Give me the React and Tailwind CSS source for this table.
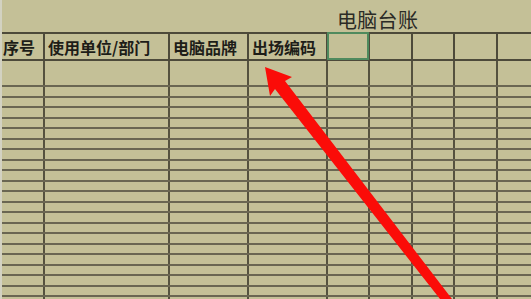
import React from "react";

const COLS = "grid grid-cols-[43px_125px_79px_79px_42px_43px_42px_43px_35px]";
const HEADERS = ["序号", "使用单位/部门", "电脑品牌", "出场编码", "", "", "", "", ""];

// 20 thin data rows, alternating 11/10 px like the sheet's zoomed rows
const ROW_H = ["h-[11px]", "h-[10px]"];

function Row({ h }) {
  return (
    <div className={`${COLS} ${h} border-b-2 border-[#6a6652]`}>
      {HEADERS.map((_, i) => (
        <div key={i} className="border-r-2 border-[#55523f]" />
      ))}
    </div>
  );
}

export default function App() {
  const rows = Array.from({ length: 21 }, (_, i) => i);

  return (
    <div
      className="relative w-[531px] h-[299px] overflow-hidden bg-[#c4c097] border-l-2 border-[#d3d2c2]"
      style={{ fontFamily: '"Noto Sans CJK SC", "Noto Sans", sans-serif' }}
    >
      {/* title above table */}
      <div className="h-[32px] pl-[335px] pt-[8px]">
        <span className="text-[20px] leading-[24px] text-[#2b2b26] tracking-[0.3px]">
          电脑台账
        </span>
      </div>

      {/* header row */}
      <div className={`${COLS} h-[29px] border-y-2 border-[#4d4a3a]`}>
        {HEADERS.map((t, i) => (
          <div
            key={i}
            className={`relative flex items-center ${i === 0 ? "pl-[1px]" : "pl-[3px]"} border-r-2 border-[#4d4a3a] text-[16px] font-bold text-[#1d1d18] whitespace-nowrap`}
          >
            {t}
            {i === 4 && (
              <div className="absolute -top-[2px] -left-[1px] -right-[1px] -bottom-[1px] border-2 border-[#4f8a5e]" />
            )}
          </div>
        ))}
      </div>

      {/* first (taller) data row */}
      <Row h="h-[26px]" />
      {rows.map((r) => (
        <Row key={r} h={ROW_H[r % 2]} />
      ))}

      {/* green edge of the active sheet at the left of the header */}
      <div className="absolute left-[-2px] top-[33px] w-[2px] h-[27px] bg-[#3d7d50]" />

      {/* red arrow pointing at 出场编码 */}
      <svg
        className="absolute left-[-2px] top-0 pointer-events-none"
        width="531"
        height="299"
        viewBox="0 0 531 299"
      >
        <polygon
          points="265,67 292,77 285,81 452,299 440,299 275,89 270,96"
          fill="#fb0c08"
        />
      </svg>
    </div>
  );
}
